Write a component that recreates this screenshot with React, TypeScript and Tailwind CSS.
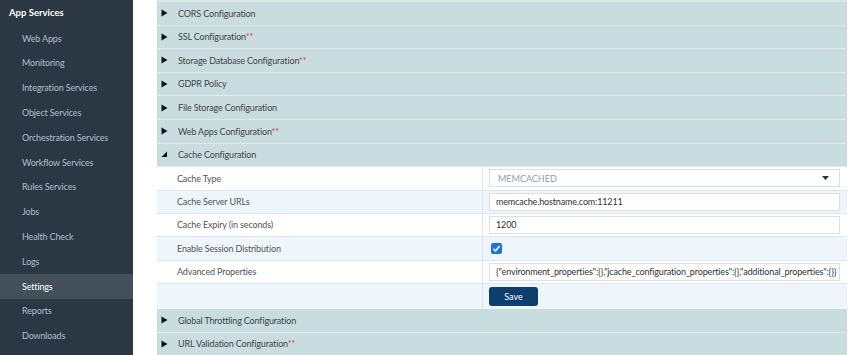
import React from "react";

const font = { fontFamily: 'Lato, "Open Sans", sans-serif' };

const navItems = [
  "Web Apps",
  "Monitoring",
  "Integration Services",
  "Object Services",
  "Orchestration Services",
  "Workflow Services",
  "Rules Services",
  "Jobs",
  "Health Check",
  "Logs",
  "Settings",
  "Reports",
  "Downloads",
];

function Arrow({ open }: { open?: boolean }) {
  if (open) {
    return (
      <svg width="7" height="7" viewBox="0 0 7 7" className="shrink-0">
        <polygon points="6,0.5 6,6 0.5,6" fill="#111" />
      </svg>
    );
  }
  return (
    <svg width="7" height="8" viewBox="0 0 7 8" className="shrink-0">
      <polygon points="0.5,0.5 6.5,4 0.5,7.5" fill="#111" />
    </svg>
  );
}

function Header({ title, star, open }: { title: string; star?: boolean; open?: boolean }) {
  return (
    <div className="flex h-[23.6px] items-center gap-[10px] border-b border-[#e3ece4] bg-[#c9dcdf] pl-[4px] text-[9px] tracking-[-0.15px] text-[#444]">
      <Arrow open={open} />
      <span>
        {title}
        {star && <span className="text-[#e23b3b]">**</span>}
      </span>
    </div>
  );
}

function Row({
  label,
  alt,
  children,
}: {
  label: string;
  alt?: boolean;
  children: React.ReactNode;
}) {
  return (
    <div className={`flex h-[23.4px] border-b border-[#dfe5ea] ${alt ? "bg-[#eef6fc]" : "bg-white"}`}>
      <div className="flex w-[326px] shrink-0 items-center border-r border-[#dfe5ea] pl-[20px] text-[9px] tracking-[-0.15px] text-[#555]">
        {label}
      </div>
      <div className="flex min-w-0 flex-1 items-center pl-[6px] pr-[7px]">{children}</div>
    </div>
  );
}

function Input({ value }: { value: string }) {
  return (
    <div className="flex h-[18px] w-full min-w-0 items-center overflow-hidden whitespace-nowrap border border-[#dcdfe3] bg-white pl-[6px] text-[9px] tracking-[-0.15px] text-[#333]">
      {value}
    </div>
  );
}

export default function App() {
  return (
    <div className="flex h-[355px] w-[850px] overflow-hidden bg-white" style={font}>
      <aside className="flex w-[133px] shrink-0 flex-col bg-[#2b3743] pt-[3px]">
        <div className="mb-[3px] flex h-[20px] items-center pl-[9px] text-[9.5px] font-bold text-white">App Services</div>
        {navItems.map((n) => (
          <div
            key={n}
            className={`flex h-[24.8px] items-center pl-[22px] text-[9px] tracking-[-0.15px] ${
              n === "Settings" ? "bg-[#434f59] text-white" : "text-[#aebfcf]"
            }`}
          >
            {n}
          </div>
        ))}
      </aside>
      <main className="min-w-0 flex-1 pl-[24px] pr-[3px]">
        <div className="border-t-[2px] border-[#dbe6de]">
          <Header title="CORS Configuration" />
          <Header title="SSL Configuration" star />
          <Header title="Storage Database Configuration" star />
          <Header title="GDPR Policy" />
          <Header title="File Storage Configuration" />
          <Header title="Web Apps Configuration" star />
          <Header title="Cache Configuration" open />
          <Row label="Cache Type">
            <div className="flex h-[18px] w-full items-center justify-between border border-[#dcdfe3] bg-white pl-[8px] pr-[10px] text-[9px] text-[#8ea0b5]">
              <span>MEMCACHED</span>
              <svg width="7" height="4" viewBox="0 0 7 4">
                <polygon points="0,0 7,0 3.5,4" fill="#333" />
              </svg>
            </div>
          </Row>
          <Row label="Cache Server URLs" alt>
            <Input value="memcache.hostname.com:11211" />
          </Row>
          <Row label="Cache Expiry (in seconds)">
            <Input value="1200" />
          </Row>
          <Row label="Enable Session Distribution" alt>
            <div className="ml-[2px] flex h-[11px] w-[11px] items-center justify-center rounded-[2px] bg-[#1a73e8]">
              <svg width="9" height="9" viewBox="0 0 9 9">
                <path d="M1.5 4.8 L3.6 6.8 L7.6 2" stroke="white" strokeWidth="1.6" fill="none" />
              </svg>
            </div>
          </Row>
          <Row label="Advanced Properties">
            <Input value={'{"environment_properties":{},"jcache_configuration_properties":{},"additional_properties":{}}'} />
          </Row>
          <div className="flex h-[25px] bg-[#eef6fc]">
            <div className="w-[326px] shrink-0 border-r border-[#dfe5ea]" />
            <div className="flex flex-1 items-center pl-[6px]">
              <button className="flex h-[19px] w-[49px] items-center justify-center rounded-[3px] bg-[#0d3e70] text-[9px] text-white">
                Save
              </button>
            </div>
          </div>
          <Header title="Global Throttling Configuration" />
          <Header title="URL Validation Configuration" star />
        </div>
      </main>
    </div>
  );
}
